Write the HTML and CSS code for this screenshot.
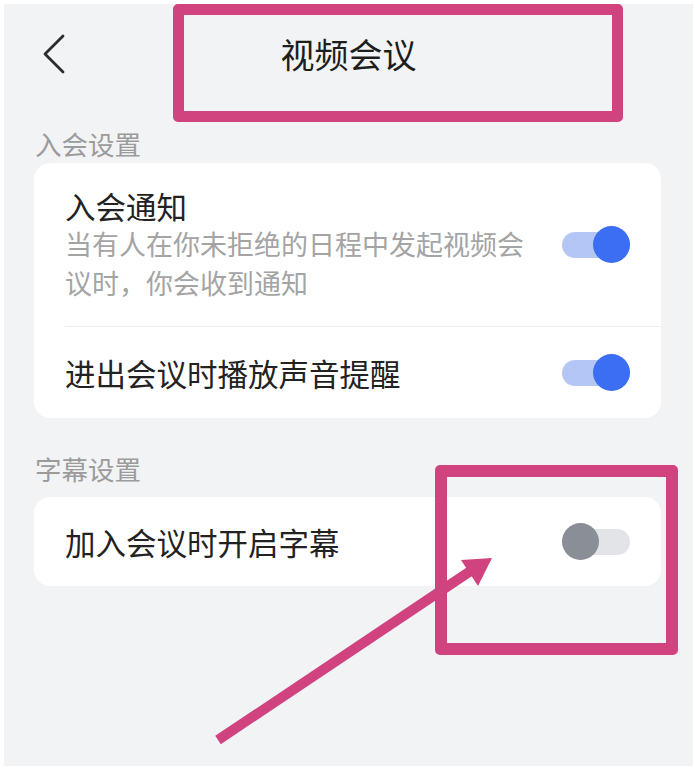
FILE: index.html
```html
<!DOCTYPE html>
<html lang="zh-CN">
<head>
<meta charset="utf-8">
<title>视频会议</title>
<link rel="stylesheet" href="styles.css">
</head>
<body>
<div class="screen">
  <header class="header">
    <div class="back">
      <svg class="back-icon" viewBox="0 0 24 40" width="24" height="40" aria-hidden="true">
        <path d="M21 2 L3 20 L21 38" fill="none" stroke="#2b2b2b" stroke-width="2.8" stroke-linecap="round" stroke-linejoin="round"/>
      </svg>
    </div>
    <h1 class="title">视频会议</h1>
    <div class="spacer"></div>
  </header>

  <div class="section-label first">入会设置</div>
  <section class="card">
    <div class="row row-tall divided">
      <div class="row-text">
        <div class="row-title">入会通知</div>
        <div class="row-desc">当有人在你未拒绝的日程中发起视频会议时，你会收到通知</div>
      </div>
      <div class="toggle on"><span class="track"></span><span class="thumb"></span></div>
    </div>
    <div class="row">
      <div class="row-text">
        <div class="row-title">进出会议时播放声音提醒</div>
      </div>
      <div class="toggle on"><span class="track"></span><span class="thumb"></span></div>
    </div>
  </section>

  <div class="section-label second">字幕设置</div>
  <section class="card">
    <div class="row row-short">
      <div class="row-text">
        <div class="row-title">加入会议时开启字幕</div>
      </div>
      <div class="toggle off"><span class="track"></span><span class="thumb"></span></div>
    </div>
  </section>

  <div class="mark mark-title"></div>
  <div class="mark mark-toggle"></div>
  <svg class="arrow" viewBox="0 0 689 762" width="689" height="762" aria-hidden="true">
    <line x1="214" y1="736" x2="468" y2="566" stroke="#d0437f" stroke-width="10"/>
    <polygon points="488,554 457,556 474,582" fill="#d0437f"/>
  </svg>
</div>
</body>
</html>
```

FILE: styles.css
```css
* {
  box-sizing: border-box;
}

html, body {
  margin: 0;
  padding: 0;
  background: #ffffff;
}

body {
  font-family: "Noto Sans CJK SC", "Noto Sans", sans-serif;
  width: 695px;
  height: 773px;
  overflow: hidden;
}

.screen {
  position: relative;
  margin: 4px 2px 0 4px;
  width: 689px;
  height: 762px;
  background: #f2f3f5;
  overflow: hidden;
}

.header {
  display: grid;
  grid-template-columns: 1fr auto 1fr;
  align-items: center;
  height: 100px;
}

.back {
  padding-left: 38px;
  display: flex;
  align-items: center;
}

.back-icon {
  display: block;
}

.title {
  margin: 0;
  font-size: 34px;
  font-weight: 400;
  color: #1e1e1e;
  line-height: 44px;
}

.section-label {
  font-size: 26.5px;
  line-height: 36px;
  color: #9b9b9b;
  padding-left: 31px;
}

.section-label.first {
  margin-top: 22px;
  margin-bottom: 1px;
}

.section-label.second {
  margin-top: 33px;
  margin-bottom: 10px;
}

.card {
  margin: 0 32px 0 30px;
  background: #ffffff;
  border-radius: 16px;
}

.row {
  display: flex;
  align-items: center;
  margin-left: 31px;
  padding-right: 31px;
  height: 91px;
}

.row-tall {
  height: 164px;
}

.row-short {
  height: 89px;
}

.divided {
  border-bottom: 1px solid #eeeeee;
}

.row-text {
  flex: 1;
  padding-right: 30px;
}

.row-title {
  font-size: 30.5px;
  line-height: 36px;
  color: #222222;
}

.row-desc {
  font-size: 27px;
  line-height: 39px;
  color: #a4a4a4;
}

.toggle {
  position: relative;
  width: 68px;
  height: 37px;
  flex: none;
}

.toggle .track {
  position: absolute;
  left: 0;
  right: 0;
  top: 5.5px;
  height: 26px;
  border-radius: 13px;
}

.toggle .thumb {
  position: absolute;
  top: 0;
  width: 37px;
  height: 37px;
  border-radius: 50%;
}

.toggle.on .track {
  background: #b3c6f6;
}

.toggle.on .thumb {
  right: 0;
  background: #3b6ef2;
}

.toggle.off .track {
  background: #e3e4e8;
}

.toggle.off .thumb {
  left: 0;
  background: #8a8e96;
}

.mark {
  position: absolute;
  border-style: solid;
  border-color: #d0437f;
  border-radius: 5px;
}

.mark-title {
  left: 169px;
  top: 0;
  width: 450px;
  height: 118px;
  border-width: 11px;
}

.mark-toggle {
  left: 431px;
  top: 461px;
  width: 243px;
  height: 190px;
  border-width: 12px;
}

.arrow {
  position: absolute;
  left: 0;
  top: 0;
}
```
